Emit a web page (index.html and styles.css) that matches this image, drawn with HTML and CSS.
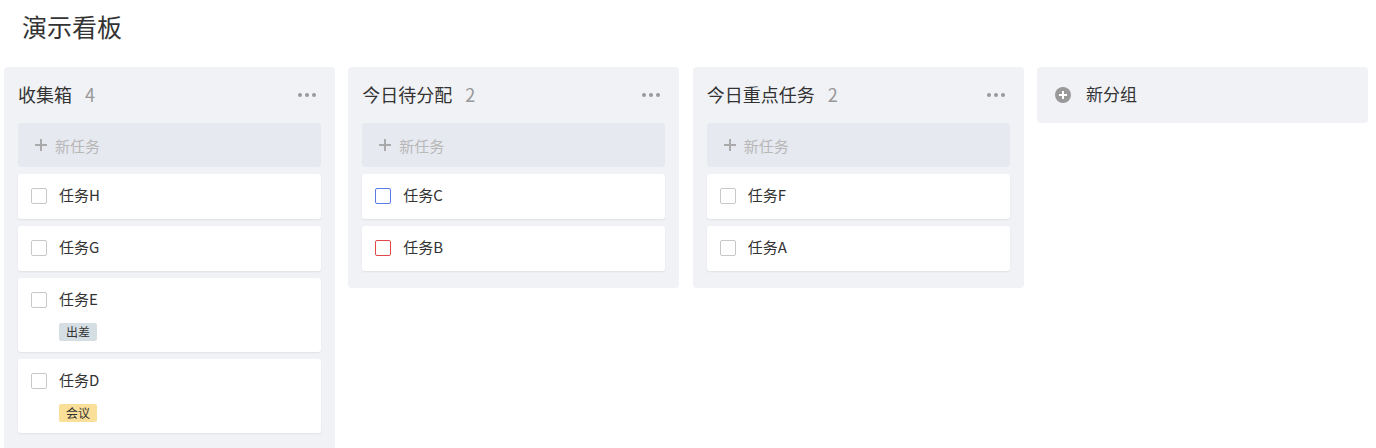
FILE: index.html
```html
<!DOCTYPE html>
<html lang="zh">
<head>
<meta charset="utf-8">
<title>演示看板</title>
<link rel="stylesheet" href="styles.css">
</head>
<body>
<h1 class="page-title">演示看板</h1>
<div class="board">
  <section class="column">
    <header class="col-head">
      <span class="col-name">收集箱</span><span class="col-count">4</span>
      <svg class="more" width="18" height="4" viewBox="0 0 18 4"><circle cx="2" cy="2" r="2"/><circle cx="9" cy="2" r="2"/><circle cx="16" cy="2" r="2"/></svg>
    </header>
    <div class="new-task"><svg class="plus" width="12" height="12" viewBox="0 0 12 12"><path d="M6 0v12M0 6h12"/></svg><span>新任务</span></div>
    <div class="cards">
      <div class="card"><div class="row"><span class="check"></span><span class="task">任务H</span></div></div>
      <div class="card"><div class="row"><span class="check"></span><span class="task">任务G</span></div></div>
      <div class="card"><div class="row"><span class="check"></span><span class="task">任务E</span></div><span class="tag tag-gray">出差</span></div>
      <div class="card"><div class="row"><span class="check"></span><span class="task">任务D</span></div><span class="tag tag-yellow">会议</span></div>
    </div>
  </section>
  <section class="column">
    <header class="col-head">
      <span class="col-name">今日待分配</span><span class="col-count">2</span>
      <svg class="more" width="18" height="4" viewBox="0 0 18 4"><circle cx="2" cy="2" r="2"/><circle cx="9" cy="2" r="2"/><circle cx="16" cy="2" r="2"/></svg>
    </header>
    <div class="new-task"><svg class="plus" width="12" height="12" viewBox="0 0 12 12"><path d="M6 0v12M0 6h12"/></svg><span>新任务</span></div>
    <div class="cards">
      <div class="card"><div class="row"><span class="check check-blue"></span><span class="task">任务C</span></div></div>
      <div class="card"><div class="row"><span class="check check-red"></span><span class="task">任务B</span></div></div>
    </div>
  </section>
  <section class="column">
    <header class="col-head">
      <span class="col-name">今日重点任务</span><span class="col-count">2</span>
      <svg class="more" width="18" height="4" viewBox="0 0 18 4"><circle cx="2" cy="2" r="2"/><circle cx="9" cy="2" r="2"/><circle cx="16" cy="2" r="2"/></svg>
    </header>
    <div class="new-task"><svg class="plus" width="12" height="12" viewBox="0 0 12 12"><path d="M6 0v12M0 6h12"/></svg><span>新任务</span></div>
    <div class="cards">
      <div class="card"><div class="row"><span class="check"></span><span class="task">任务F</span></div></div>
      <div class="card"><div class="row"><span class="check"></span><span class="task">任务A</span></div></div>
    </div>
  </section>
  <section class="column add-group">
    <svg class="add-icon" width="16" height="16" viewBox="0 0 16 16"><circle cx="8" cy="8" r="8" fill="#999"/><path d="M8 4v8M4 8h8" stroke="#fff" stroke-width="2"/></svg>
    <span class="add-label">新分组</span>
  </section>
</div>
</body>
</html>
```
FILE: styles.css
```css
* { box-sizing: border-box; }
body {
  margin: 0;
  background: #fff;
  font-family: "Noto Sans CJK SC", "Noto Sans", sans-serif;
  color: #333;
}
.page-title {
  margin: 0;
  height: 55px;
  line-height: 52px;
  padding-left: 22px;
  font-size: 25px;
  font-weight: 400;
  color: #333;
}
.board {
  display: flex;
  align-items: flex-start;
  gap: 13.33px;
  padding: 12px 4px 0;
}
.column {
  flex: 0 0 331px;
  background: #f1f2f6;
  border-radius: 4px;
  padding: 0 14px 17px;
}
.col-head {
  display: flex;
  align-items: center;
  height: 56px;
  font-size: 18px;
  line-height: 22px;
}
.col-name, .col-count { padding-bottom: 3px; }
.col-name { color: #333; }
.col-count { color: #999; margin-left: 13px; }
.more { margin-left: auto; margin-right: 5px; fill: #999; }
.new-task {
  display: flex;
  align-items: center;
  height: 44px;
  padding-left: 17px;
  background: #e6e9f0;
  border-radius: 4px;
  font-size: 15px;
  color: #b8b8b8;
}
.plus { stroke: #aaa; stroke-width: 2; margin-right: 8px; }
.cards {
  display: flex;
  flex-direction: column;
  gap: 7px;
  margin-top: 7px;
}
.card {
  background: #fff;
  border-radius: 3px;
  box-shadow: 0 1px 2px rgba(0, 0, 0, 0.07);
  padding: 0 13px;
}
.card .tag { margin: 0 0 11px 28px; }
.row {
  display: flex;
  align-items: center;
  height: 45px;
}
.check {
  width: 16px;
  height: 16px;
  border: 1px solid #c8c8c8;
  border-radius: 2px;
  margin-right: 12px;
  flex: none;
  margin-bottom: 1px;
}
.check-blue { border-color: #5a7be6; }
.check-red { border-color: #e2484a; }
.task { font-size: 15px; line-height: 20px; color: #333; padding-bottom: 3px; }
.tag {
  display: block;
  width: fit-content;
  height: 18px;
  line-height: 17px;
  padding: 0 7px;
  border-radius: 2px;
  font-size: 12px;
  color: #333;
}
.tag-gray { background: #d5dfe3; }
.tag-yellow { background: #f9df98; }
.add-group {
  display: flex;
  align-items: center;
  height: 56px;
  padding: 0 18px;
}
.add-icon { margin-right: 15px; }
.add-label { font-size: 17px; line-height: 22px; padding-bottom: 2px; color: #333; }
```
